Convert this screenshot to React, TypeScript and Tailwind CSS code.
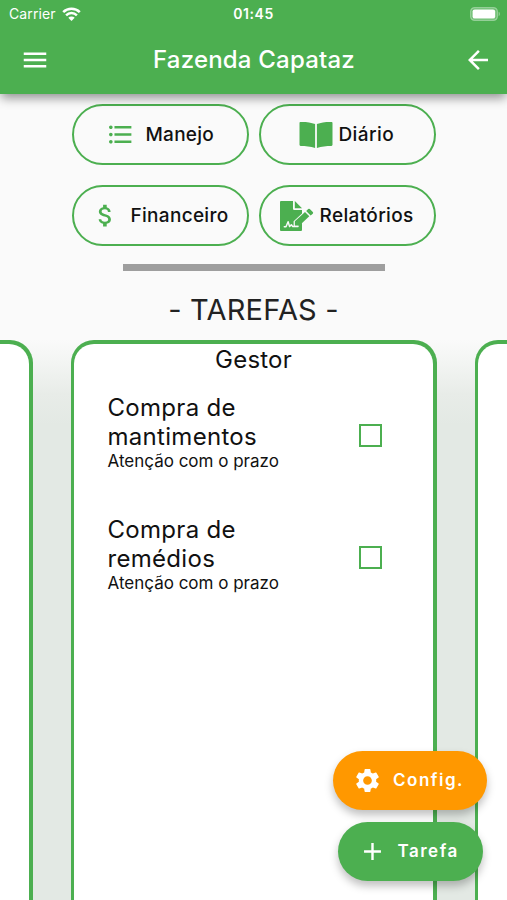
import type { ReactNode } from "react";
import {
  MdAdd,
  MdArrowBack,
  MdAttachMoney,
  MdFormatListBulleted,
  MdMenu,
  MdSettings,
} from "react-icons/md";

const tasks = [
  { title: "Compra de mantimentos", note: "Atenção com o prazo" },
  { title: "Compra de remédios", note: "Atenção com o prazo" },
];

function WifiIcon() {
  return (
    <svg width="19" height="14" viewBox="0 0 19 14" fill="none" stroke="white" strokeWidth="2.5">
      <path d="M1.2 5.1a11.8 11.8 0 0 1 16.6 0" />
      <path d="M4.1 8.3a7.7 7.7 0 0 1 10.8 0" />
      <path d="M9.5 14 6.3 10.8a4.5 4.5 0 0 1 6.4 0Z" fill="white" stroke="none" />
    </svg>
  );
}

function BatteryIcon() {
  return (
    <svg width="31" height="14" viewBox="0 0 31 14">
      <rect x="0.6" y="0.6" width="26.8" height="12.8" rx="4" fill="white" fillOpacity="0.2" stroke="white" strokeOpacity="0.35" strokeWidth="1.2" />
      <rect x="2.6" y="2.4" width="22.6" height="9.2" rx="2.2" fill="white" />
      <path d="M28.7 4.8c1.5.6 1.5 3.8 0 4.4Z" fill="white" fillOpacity="0.45" />
    </svg>
  );
}

function BookIcon() {
  return (
    <svg width="34" height="28" viewBox="0 0 34 28" fill="currentColor">
      <path d="M1.3 1C6.5.8 12 1.4 16.1 3.1V27C11.5 25.4 6.5 24.9 1.6 24.9Q.5 24.9.5 23.8V1.9Q.5 1.1 1.3 1Z" />
      <path d="M32.7 1C27.5.8 22 1.4 17.9 3.1V27C22.5 25.4 27.5 24.9 32.4 24.9Q33.5 24.9 33.5 23.8V1.9Q33.5 1.1 32.7 1Z" />
    </svg>
  );
}

function SignatureIcon() {
  return (
    <svg width="34" height="30" viewBox="0 0 34 30" fill="currentColor">
      <path d="M1 0H13V7.7Q13 9 14.3 9H22V12.6L13.6 20.3V25H18.3L22 21.5V29Q22 30 21 30H1Q0 30 0 29V1Q0 0 1 0Z" />
      <path d="M14.8 0 22 7.2H14.8Z" />
      <path d="M14.9 20.3 25 10.9 29.3 15.3 19.2 24.7H14.9Z" />
      <path d="M26.2 9.9 28.2 8.1Q29 7.4 29.8 8.1L32.8 11.1Q33.6 11.9 32.8 12.7L30.6 14.4Z" />
      <path d="M4.3 25.7H6L8.1 20.8 9.6 25.6 11.4 23.7 12.8 25.6H18" fill="none" stroke="#fafafa" strokeWidth="1.5" strokeLinejoin="round" strokeLinecap="round" />
    </svg>
  );
}

function StatusBar() {
  return (
    <div className="grid h-[27px] grid-cols-3 items-center pl-[9px] pr-[6px] text-white">
      <div className="flex items-center gap-[6px]">
        <span className="text-[14px] tracking-[0.1px]">Carrier</span>
        <WifiIcon />
      </div>
      <span className="-ml-[3px] text-center text-[14px] font-semibold tracking-[0.6px]">01:45</span>
      <div className="flex justify-end">
        <BatteryIcon />
      </div>
    </div>
  );
}

function MenuButton({ icon, label, className }: { icon: ReactNode; label: string; className: string }) {
  return (
    <button
      className={`flex h-[61px] w-[177px] items-center rounded-full border-2 border-[#4caf50] pt-px text-[19px] font-medium text-[#111] ${className}`}
    >
      <span className="text-[#4caf50]">{icon}</span>
      <span className="whitespace-nowrap pt-px">{label}</span>
    </button>
  );
}

function TaskCard({ children }: { children?: ReactNode }) {
  return (
    <section className="h-[600px] w-[366px] shrink-0 rounded-[23px] bg-[#4caf50] px-[3.5px] pt-1">
      <div className="h-full rounded-t-[20px] bg-white">{children}</div>
    </section>
  );
}

export default function App() {
  return (
    <div className="relative flex h-[900px] w-[507px] flex-col overflow-hidden bg-[#fafafa] font-['Inter','Liberation_Sans',sans-serif] text-[#111]">
      <header className="relative h-[94px] shrink-0 bg-[#4caf50] shadow-[0_5px_10px_-1px_rgba(0,0,0,0.42)]">
        <StatusBar />
        <div className="flex h-[65px] items-center justify-between pl-5 pr-[14px] text-white">
          <MdMenu size={30} />
          <h1 className="-ml-[5px] text-[24px] font-medium tracking-[0.2px]">Fazenda Capataz</h1>
          <MdArrowBack size={30} />
        </div>
      </header>

      {/* Shortcuts */}
      <div className="mx-auto mt-[9.5px] grid shrink-0 grid-cols-2 gap-x-[10px] gap-y-5">
        <MenuButton icon={<MdFormatListBulleted size={29} />} label="Manejo" className="gap-[11px] pl-[32px] tracking-[0.25px]" />
        <MenuButton icon={<BookIcon />} label="Diário" className="gap-[6px] pl-[38px] tracking-[0.4px]" />
        <MenuButton icon={<MdAttachMoney size={29} />} label="Financeiro" className="gap-[11px] pl-[17px] tracking-[0.3px]" />
        <MenuButton icon={<SignatureIcon />} label="Relatórios" className="gap-[6px] pl-[19px] tracking-[0.35px]" />
      </div>

      <div className="ml-[123px] mt-[18.5px] h-[7px] w-[262px] shrink-0 bg-[#9e9e9e]" />

      <h2 className="mt-5 shrink-0 text-center text-[29px] leading-[38px] tracking-[0.2px] text-[#222]">- TAREFAS -</h2>

      {/* Task boards */}
      <main className="mt-[11px] flex shrink-0 justify-center gap-[38px] bg-[linear-gradient(to_bottom,#fafafa_0,#f3f5f3_22px,#e8ece8_54px,#e3e9e4_85px)]">
        <TaskCard />
        <TaskCard>
          <h3 className="pt-px text-center text-[24px] leading-[29px] tracking-[0.2px]">Gestor</h3>
          <ul className="mt-[18px] flex flex-col gap-[42px] pl-[33.5px] pr-[51px]">
            {tasks.map((task) => (
              <li key={task.title} className="flex h-20 items-center justify-between">
                <div className="w-[190px]">
                  <p className="text-[24px] leading-[29.4px] tracking-[0.3px]">{task.title}</p>
                  <p className="text-[17px] leading-[20px]">{task.note}</p>
                </div>
                <span className="mt-[7px] size-[23px] border-2 border-[#4caf50]" />
              </li>
            ))}
          </ul>
        </TaskCard>
        <TaskCard />
      </main>

      {/* Floating actions */}
      <div className="absolute bottom-[19px] right-5 flex flex-col items-center gap-3 text-white">
        <button className="flex h-[59px] w-[154px] items-center gap-[11px] rounded-full bg-[#ff9800] pl-5 text-[17px] font-semibold tracking-[1.5px] shadow-[0_5px_9px_rgba(0,0,0,0.25)]">
          <MdSettings size={29} />
          Config.
        </button>
        <button className="flex h-[59px] w-[145px] items-center gap-[11px] rounded-full bg-[#4caf50] pl-5 text-[17px] font-semibold tracking-[1.5px] shadow-[0_5px_9px_rgba(0,0,0,0.25)]">
          <MdAdd size={29} />
          Tarefa
        </button>
      </div>
    </div>
  );
}
